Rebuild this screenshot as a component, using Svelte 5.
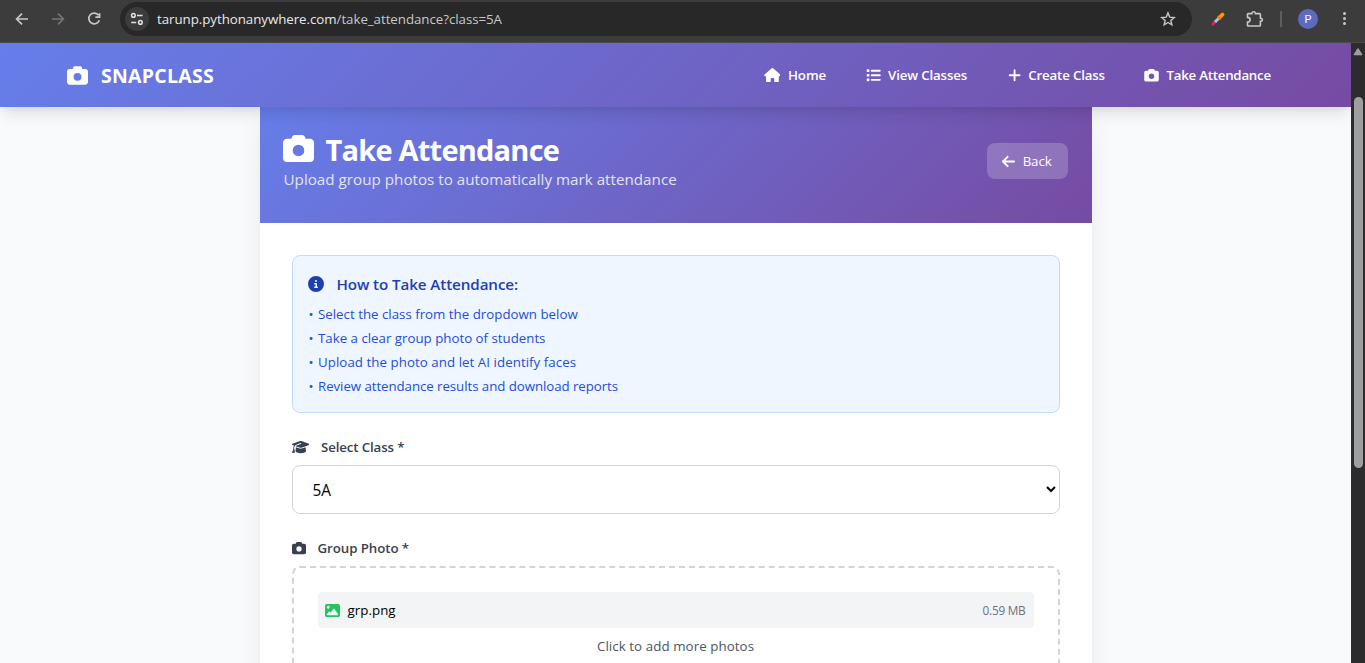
<script>
  const icons = {
    camera: { w: 512, d: 'M149.1 64.8L138.7 96H64C28.7 96 0 124.7 0 160V416c0 35.3 28.7 64 64 64H448c35.3 0 64-28.7 64-64V160c0-35.3-28.7-64-64-64H373.3L362.9 64.8C356.4 45.2 338.1 32 317.4 32H194.6c-20.7 0-39 13.2-45.5 32.8zM256 192a96 96 0 1 1 0 192 96 96 0 1 1 0-192z' },
    home: { w: 576, d: 'M575.8 255.5c0 18-15 32.1-32 32.1h-32l.7 160.2c0 2.7-.2 5.4-.5 8.1V472c0 22.1-17.9 40-40 40H456c-1.1 0-2.2 0-3.3-.1c-1.4 .1-2.8 .1-4.2 .1H416 392c-22.1 0-40-17.9-40-40V448 384c0-17.7-14.3-32-32-32H256c-17.7 0-32 14.3-32 32v64 24c0 22.1-17.9 40-40 40H160 128.1c-1.5 0-3-.1-4.5-.2c-1.2 .1-2.4 .2-3.6 .2H104c-22.1 0-40-17.9-40-40V360c0-.9 0-1.9 .1-2.8V287.6H32c-18 0-32-14-32-32.1c0-9 3-17 10-24L266.4 8c7-7 15-8 22-8s15 2 21 7L564.8 231.5c8 7 12 15 11 24z' },
    list: { w: 512, d: 'M40 48C26.7 48 16 58.7 16 72v48c0 13.3 10.7 24 24 24H88c13.3 0 24-10.7 24-24V72c0-13.3-10.7-24-24-24H40zM192 64c-17.7 0-32 14.3-32 32s14.3 32 32 32H480c17.7 0 32-14.3 32-32s-14.3-32-32-32H192zm0 160c-17.7 0-32 14.3-32 32s14.3 32 32 32H480c17.7 0 32-14.3 32-32s-14.3-32-32-32H192zm0 160c-17.7 0-32 14.3-32 32s14.3 32 32 32H480c17.7 0 32-14.3 32-32s-14.3-32-32-32H192zM16 232v48c0 13.3 10.7 24 24 24H88c13.3 0 24-10.7 24-24V232c0-13.3-10.7-24-24-24H40c-13.3 0-24 10.7-24 24zM40 368c-13.3 0-24 10.7-24 24v48c0 13.3 10.7 24 24 24H88c13.3 0 24-10.7 24-24V392c0-13.3-10.7-24-24-24H40z' },
    plus: { w: 448, d: 'M256 80c0-17.7-14.3-32-32-32s-32 14.3-32 32V224H48c-17.7 0-32 14.3-32 32s14.3 32 32 32H192V432c0 17.7 14.3 32 32 32s32-14.3 32-32V288H400c17.7 0 32-14.3 32-32s-14.3-32-32-32H256V80z' },
    back: { w: 448, d: 'M9.4 233.4c-12.5 12.5-12.5 32.8 0 45.3l160 160c12.5 12.5 32.8 12.5 45.3 0s12.5-32.8 0-45.3L109.2 288 416 288c17.7 0 32-14.3 32-32s-14.3-32-32-32l-306.7 0L214.6 118.6c12.5-12.5 12.5-32.8 0-45.3s-32.8-12.5-45.3 0l-160 160z' },
    info: { w: 512, d: 'M256 512A256 256 0 1 0 256 0a256 256 0 1 0 0 512zM216 336h24V272H216c-13.3 0-24-10.7-24-24s10.7-24 24-24h48c13.3 0 24 10.7 24 24v88h8c13.3 0 24 10.7 24 24s-10.7 24-24 24H216c-13.3 0-24-10.7-24-24s10.7-24 24-24zm40-208a32 32 0 1 1 0 64 32 32 0 1 1 0-64z' },
    cap: { w: 640, d: 'M320 32c-8.1 0-16.1 1.4-23.7 4.1L15.8 137.4C6.3 140.9 0 149.9 0 160s6.3 19.1 15.8 22.6l57.9 20.9C57.3 229.3 48 259.8 48 291.9v28.1c0 28.4-10.8 57.7-22.3 80.8c-6.5 13-13.9 25.8-22.5 37.6C0 442.7-.9 448.3 .9 453.4s6 8.9 11.2 10.2l64 16c4.2 1.1 8.7 .3 12.4-2s6.3-6.1 7.1-10.4c8.6-42.8 4.3-81.2-2.1-108.7C90.3 344.3 86 329.8 80 316.5V291.9c0-30.2 10.2-58.7 27.9-81.5c12.9-15.5 29.6-28 49.2-35.7l157-61.7c8.2-3.2 17.5 .8 20.7 9s-.8 17.5-9 20.7l-157 61.7c-12.4 4.9-23.3 12.4-32.2 21.6l159.6 57.6c7.6 2.7 15.6 4.1 23.7 4.1s16.1-1.4 23.7-4.1L624.2 182.6c9.5-3.4 15.8-12.5 15.8-22.6s-6.3-19.1-15.8-22.6L343.7 36.1C336.1 33.4 328.1 32 320 32zM128 408c0 35.3 86 72 192 72s192-36.7 192-72L496.7 262.6 354.5 314c-11.1 4-22.8 6-34.5 6s-23.5-2-34.5-6L143.3 262.6 128 408z' },
    image: { w: 512, d: 'M0 96C0 60.7 28.7 32 64 32H448c35.3 0 64 28.7 64 64V416c0 35.3-28.7 64-64 64H64c-35.3 0-64-28.7-64-64V96zM323.8 202.5c-4.5-6.6-11.9-10.5-19.8-10.5s-15.4 3.9-19.8 10.5l-87 127.6L170.7 297c-4.6-5.7-11.5-9-18.7-9s-14.2 3.3-18.7 9l-64 80c-5.8 7.2-6.9 17.1-2.9 25.4s12.4 13.6 21.6 13.6h96 32H424c8.9 0 17.1-4.9 21.2-12.8s3.6-17.4-1.4-24.7l-120-176zM112 192a48 48 0 1 0 0-96 48 48 0 1 0 0 96z' }
  };

  const links = [
    { icon: 'home', label: 'Home', cls: 'home' },
    { icon: 'list', label: 'View Classes', cls: 'view' },
    { icon: 'plus', label: 'Create Class', cls: 'create' },
    { icon: 'camera', label: 'Take Attendance', cls: 'take' }
  ];

  const steps = [
    { text: 'Select the class from the dropdown below', cls: 's1' },
    { text: 'Take a clear group photo of students', cls: 's2' },
    { text: 'Upload the photo and let AI identify faces', cls: 's3' },
    { text: 'Review attendance results and download reports', cls: 's4' }
  ];
</script>

{#snippet icon(name, size)}
  <svg class="fa" viewBox="0 0 {icons[name].w} 512" width={(icons[name].w / 512) * size} height={size} aria-hidden="true">
    <path fill="currentColor" d={icons[name].d} />
  </svg>
{/snippet}

<div class="window">
  <div class="toolbar">
    <svg class="tb back-nav" width="16" height="16" viewBox="0 0 16 16"><path d="M14 8H3M8 2.6L2.6 8L8 13.4" /></svg>
    <svg class="tb forward-nav" width="16" height="16" viewBox="0 0 16 16"><path d="M2 8H13M8 2.6L13.4 8L8 13.4" /></svg>
    <svg class="tb reload" width="16" height="16" viewBox="0 0 16 16"><path d="M12.6 4.3A5.4 5.4 0 1 0 13.3 9.2M13.6 2.2V6.2H9.4" /></svg>
    <div class="omnibox">
      <span class="tune">
        <svg width="14" height="14" viewBox="0 0 14 14"><circle cx="3.4" cy="3.4" r="1.8" /><path d="M7 3.4h5.6M1.2 10.4h5" /><circle cx="10.4" cy="10.4" r="1.8" /></svg>
      </span>
      <span class="url">tarunp.pythonanywhere.com<i>/take_attendance?class=5A</i></span>
      <svg class="star" width="16" height="16" viewBox="0 0 16 16"><path d="M8 1.9L9.75 6.1L14.3 6.45L10.85 9.4L11.9 13.85L8 11.5L4.1 13.85L5.15 9.4L1.7 6.45L6.25 6.1Z" /></svg>
    </div>
    <svg class="dropper" width="14" height="14" viewBox="0 0 14 14">
      <path d="M1.8 12.2L4.2 9.8" stroke="#e91e63" stroke-width="2.8" stroke-linecap="round" />
      <path d="M4 10L7.8 6.2" stroke="#90caf9" stroke-width="3" />
      <path d="M8.6 5.4L11.5 2.5" stroke="#ff9800" stroke-width="3.8" stroke-linecap="round" />
      <path d="M7 4.6L9.4 7" stroke="#f57c00" stroke-width="1.4" stroke-linecap="round" />
    </svg>
    <svg class="puzzle" width="18" height="18" viewBox="0 0 18 18"><path d="M2.2 3.6H5.9C5.7 1.2 9.7 1.2 9.5 3.6H13.6Q14.4 3.6 14.4 4.4V8.2C16.9 8 16.9 11.5 14.4 11.3V15.2Q14.4 16 13.6 16H2.2Q1.5 16 1.5 15.2V12C5 12 5 7.4 1.5 7.4V4.4Q1.5 3.6 2.2 3.6Z" /></svg>
    <span class="divider"></span>
    <span class="avatar">P</span>
    <span class="kebab"><b></b><b></b><b></b></span>
  </div>

  <div class="viewport">
    <div class="page">
      <header class="navbar">
        <div class="brand">{@render icon('camera', 21)}<span>SNAPCLASS</span></div>
        <nav>
          {#each links as link}
            <a class={link.cls} href="#{link.cls}">{@render icon(link.icon, 15)}<span>{link.label}</span></a>
          {/each}
        </nav>
      </header>

      <main class="card">
        <section class="hero">
          <div class="hero-text">
            <h1>{@render icon('camera', 31)}<span>Take Attendance</span></h1>
            <p>Upload group photos to automatically mark attendance</p>
          </div>
          <a class="back" href="#back">{@render icon('back', 15)}<span>Back</span></a>
        </section>

        <div class="body">
          <section class="info">
            <h2>{@render icon('info', 16)}<span>How to Take Attendance:</span></h2>
            <ul>
              {#each steps as step}
                <li class={step.cls}><em>•</em><span>{step.text}</span></li>
              {/each}
            </ul>
          </section>

          <label class="field-label class-label" for="cls">{@render icon('cap', 14)}<span>Select Class *</span></label>
          <select id="cls"><option>5A</option></select>

          <div class="field-label photo-label">{@render icon('camera', 14)}<span>Group Photo *</span></div>
          <div class="dropzone">
            <div class="file">
              {@render icon('image', 15)}
              <span class="name">grp.png</span>
              <span class="size">0.59 MB</span>
            </div>
            <p><span>Click to add more photos</span></p>
          </div>
        </div>
      </main>
    </div>

    <div class="scrollbar">
      <svg width="10" height="8" viewBox="0 0 10 8"><path d="M5 1L8.6 6.6H1.4Z" fill="#9f9f9f" stroke="#9f9f9f" stroke-width="1.4" stroke-linejoin="round" /></svg>
      <div class="thumb"></div>
    </div>
  </div>
</div>

<style>
  :global(body) { margin: 0; overflow: hidden; }
  * { box-sizing: border-box; }
  .window {
    width: 1365px; height: 663px; overflow: hidden;
    display: flex; flex-direction: column;
    font-family: "Open Sans", "Noto Sans", sans-serif;
  }
  .fa { display: block; flex: none; }
  a { text-decoration: none; color: inherit; }
  span { white-space: nowrap; }

  .toolbar {
    height: 43px; flex: none; display: flex; align-items: center;
    padding: 0 0 5px 14px; background: #3c3c3c; border-bottom: 1px solid #4b4a4e;
  }
  .tb { fill: none; stroke: #c7c7c7; stroke-width: 1.7; flex: none; }
  .back-nav { margin-right: 20px; }
  .forward-nav { margin-right: 20px; stroke: #757575; }
  .omnibox {
    width: 1072px; height: 34px; margin: 1px 0 0 18px; border-radius: 17px; background: #282828;
    display: flex; align-items: center; padding: 0 16px 0 5px; flex: none;
  }
  .tune { width: 24px; height: 24px; border-radius: 50%; background: #3c3c3c; display: grid; place-items: center; }
  .tune svg { fill: none; stroke: #e3e3e3; stroke-width: 1.5; }
  .url { margin-left: 8px; font-size: 13.3px; line-height: 20px; letter-spacing: -0.04px; color: #e8e8e8; flex: 1; }
  .url i { font-style: normal; color: #c7c7c7; }
  .star { fill: none; stroke: #c7c7c7; stroke-width: 1.4; }
  .dropper { fill: none; margin-left: 19px; }
  .puzzle { fill: none; stroke: #c7c7c7; stroke-width: 1.6; margin-left: 21px; }
  .divider { width: 2px; height: 16px; background: #5e5e5e; margin-left: 16px; }
  .avatar {
    width: 20px; height: 20px; border-radius: 50%; background: #5c6bc0; color: #fff;
    font: 11px/21px Roboto, sans-serif; text-align: center; margin-left: 16px;
  }
  .kebab { display: flex; flex-direction: column; gap: 2.4px; margin-left: 24.5px; }
  .kebab b { width: 3px; height: 3px; border-radius: 50%; background: #c7c7c7; }

  .viewport { flex: 1; min-height: 0; display: flex; }
  .page { width: 1351px; background: #f9fafb; display: flex; flex-direction: column; align-items: center; overflow: hidden; }
  .navbar {
    position: relative; z-index: 2; width: 1351px; height: 64px; flex: none;
    display: flex; align-items: center; padding-left: 67px;
    background: linear-gradient(135deg, #667eea 0%, #764ba2 100%);
    box-shadow: 0 10px 15px -3px rgba(0, 0, 0, 0.1), 0 4px 6px -2px rgba(0, 0, 0, 0.05);
    color: #fff;
  }
  .brand { display: flex; align-items: center; gap: 13px; width: 696.5px; font-size: 19.5px; font-weight: 700; letter-spacing: 0.25px; }
  nav { display: flex; font-size: 13.3px; font-weight: 650; }
  nav a { display: flex; align-items: center; gap: 7.5px; height: 20px; }
  nav .home { width: 102px; letter-spacing: -0.05px; }
  nav .home .fa, nav a :global(.fa) { height: 14.5px; }
  nav .view { width: 142px; letter-spacing: -0.15px; }
  nav .create { width: 136.5px; letter-spacing: -0.16px; }
  nav .take { letter-spacing: -0.25px; }

  .card {
    width: 832px; flex: none; margin-top: -8px; height: 760px; background: #fff;
    box-shadow: 0 20px 25px -5px rgba(0, 0, 0, 0.1), 0 10px 10px -5px rgba(0, 0, 0, 0.04);
  }
  .hero {
    height: 124px; padding: 0 24px 0 23px; color: #fff;
    display: flex; align-items: center; justify-content: space-between;
    background: linear-gradient(135deg, #667eea 0%, #764ba2 100%);
  }
  h1 { margin: 0; display: flex; align-items: center; gap: 12px; height: 36px; font-size: 29px; line-height: 36px; font-weight: 700; letter-spacing: -0.78px; }
  h1 .fa { margin-top: -2px; }
  h1 span { padding-top: 1px; }
  .hero p { margin: 0 0 0 1px; font-size: 15.2px; line-height: 24px; letter-spacing: 0.01px; color: #e2e3f3; white-space: nowrap; }
  .back {
    width: 81px; height: 36px; padding-left: 15px; border-radius: 8px;
    display: flex; align-items: center; gap: 8px;
    background: rgba(255, 255, 255, 0.2); font-size: 13.3px; letter-spacing: -0.1px;
  }

  .body { padding: 32px; }
  .info { height: 158px; border: 1px solid #bfdbfe; border-radius: 8px; background: #eff6ff; padding: 15px 15px; }
  h2 { margin: 0; height: 26px; display: flex; align-items: center; gap: 13px; font-size: 15.2px; font-weight: 600; letter-spacing: -0.1px; color: #1e40af; }
  ul { list-style: none; margin: 5px 0 0; padding: 0; }
  li { display: flex; height: 24px; align-items: center; font-size: 13.3px; line-height: 24px; color: #1d4ed8; }
  em { font-style: normal; width: 9.5px; margin-left: 1px; }
  .s2 { letter-spacing: -0.01px; }
  .s3 { letter-spacing: 0.05px; }
  .s4 { letter-spacing: -0.07px; }
  .field-label { display: flex; align-items: center; height: 20px; gap: 12px; font-size: 13.3px; font-weight: 600; letter-spacing: -0.13px; color: #374151; }
  .class-label { margin-top: 24px; }
  select {
    display: block; width: 768px; height: 49px; margin: 8px 0 0; padding: 2px 0 0 16px;
    border: 1px solid #d1d5db; border-radius: 8px; background: #fff; color: #000;
    font: 15.4px "Open Sans", sans-serif;
  }
  .photo-label { margin-top: 24px; letter-spacing: -0.08px; }
  .dropzone { margin-top: 8px; height: 180px; border: 2px dashed #d1d5db; border-radius: 8px; padding: 24px; }
  .file { height: 36px; display: flex; align-items: center; padding: 0 8px 0 7px; border-radius: 4px; background: #f3f4f6; color: #22c55e; }
  .name { flex: 1; margin-left: 8px; font-size: 13.3px; letter-spacing: 0.05px; color: #000; }
  .size { font-size: 11.8px; letter-spacing: -0.25px; color: #6b7280; }
  .dropzone p { margin: 8px 0 0; text-align: center; font-size: 13.3px; line-height: 20px; letter-spacing: 0.08px; color: #4b5563; }

  .scrollbar { width: 14px; background: #2c2c2c; padding-top: 5px; display: flex; flex-direction: column; align-items: center; }
  .thumb { width: 9px; height: 371px; margin-top: 41px; border-radius: 5px; background: #9f9f9f; }
</style>
